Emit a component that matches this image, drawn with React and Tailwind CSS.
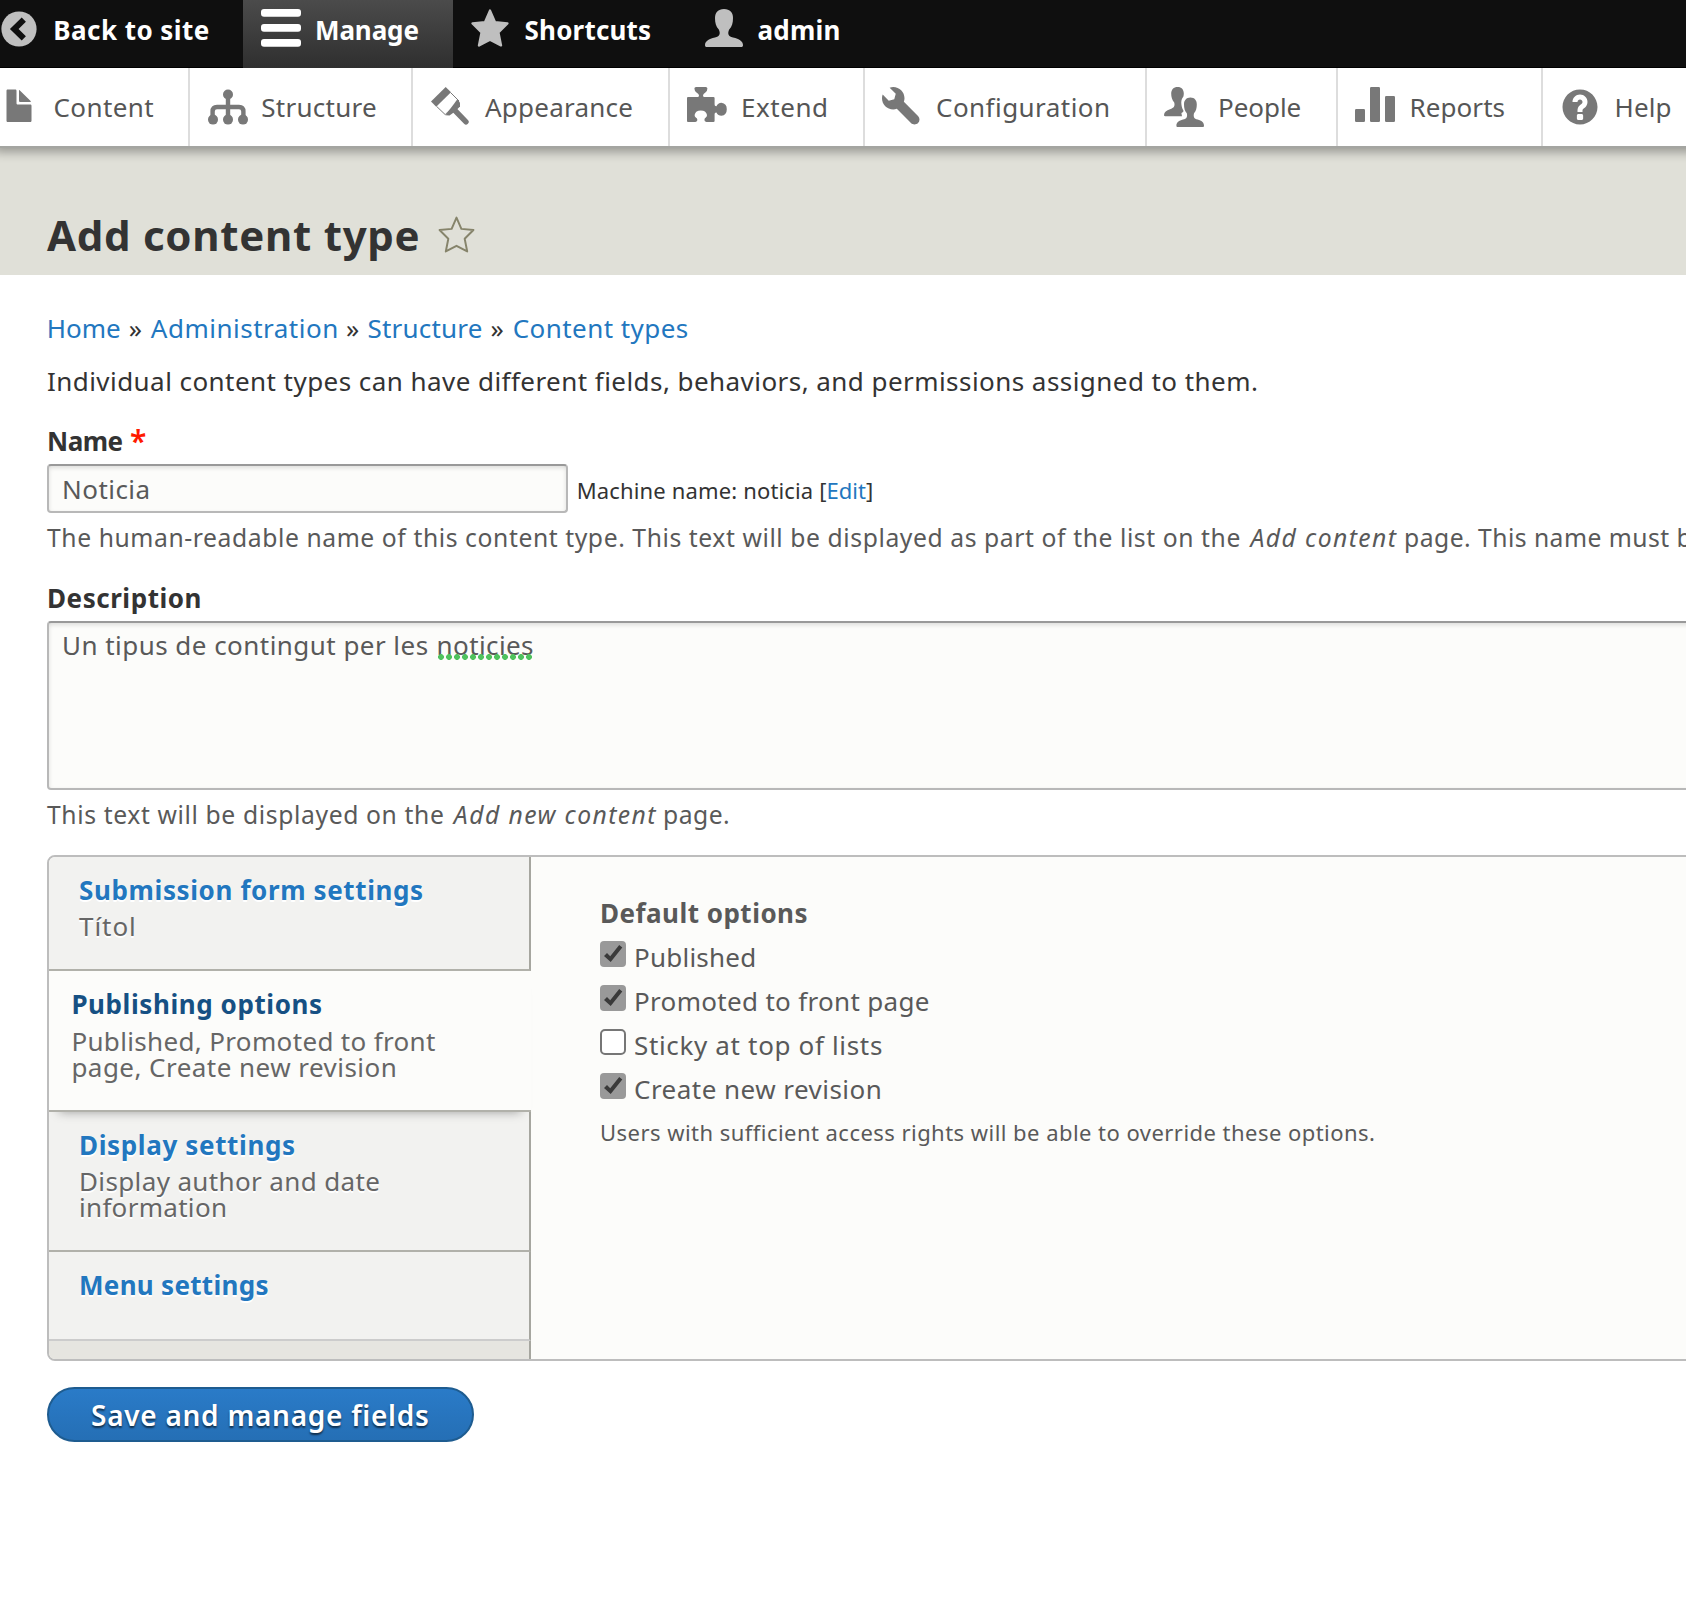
const STAR =
  "M19 1.6 L24 13.2 L36.4 14.4 L27.4 23.4 L30 36.4 L19 30.6 L8 36.4 L10.6 23.4 L1.6 14.4 L14 13.2 Z";

const TOP_ICON = "shrink-0 fill-[#bfbfbf]";
const TRAY_ICON = "mt-[19px] h-10 w-10 shrink-0 fill-[#787878]";

function BackIcon() {
  return (
    <svg viewBox="0 0 36 36" className={TOP_ICON + " ml-px mt-[11px] h-9 w-9"}>
      <circle cx="18" cy="18" r="17.6" />
      <path d="M22.8 8.6 L13.2 18 L22.8 27.4" fill="none" stroke="#0f0f0f" strokeWidth="6" strokeLinejoin="miter" />
    </svg>
  );
}

function MenuIcon() {
  return (
    <svg viewBox="0 0 40 38" className="ml-[18px] mt-[9px] h-[38px] w-10 shrink-0 fill-white">
      <rect width="40" height="7.8" rx="3" />
      <rect y="15" width="40" height="7.8" rx="3" />
      <rect y="30" width="40" height="7.8" rx="3" />
    </svg>
  );
}

function StarIcon() {
  return (
    <svg viewBox="0 0 38 38" className={TOP_ICON + " ml-[18px] mt-[9px] h-[38px] w-[38px]"}>
      <path d={STAR} stroke="#bfbfbf" strokeWidth="2.4" strokeLinejoin="round" />
    </svg>
  );
}

function UserIcon() {
  return (
    <svg viewBox="0 0 38 38" className={TOP_ICON + " mt-[9px] h-[38px] w-[38px]"}>
      <path d="M19 0 C25 0 28 3.5 28 9 C28 14 27 17.5 24.2 20.5 C22.2 25 23.5 27.5 28 28.5 C34.5 30 38 32.5 38 36 C38 37.4 37.5 38 36 38 H2 C.5 38 0 37.4 0 36 C0 32.5 3.5 30 10 28.5 C14.5 27.5 15.8 25 13.8 20.5 C11 17.5 10 14 10 9 C10 3.5 13 0 19 0Z" />
    </svg>
  );
}

function FileIcon() {
  return (
    <svg viewBox="0 0 16 16" className={TRAY_ICON}>
      <path d="M12.502 7h-5c-.276 0-.502-.225-.502-.5v-5c0-.275-.225-.5-.5-.5h-3c-.275 0-.5.225-.5.5v12.029c0 .275.225.5.5.5h9.002c.275 0 .5-.225.5-.5v-6.029c0-.275-.225-.5-.5-.5zM8.502 6h4c.275 0 .34-.159.146-.354l-4.293-4.292c-.195-.195-.353-.129-.353.146v4c0 .275.225.5.5.5z" />
    </svg>
  );
}

function OrgChartIcon() {
  return (
    <svg viewBox="0 0 40 40" className={TRAY_ICON}>
      <circle cx="20" cy="7.5" r="5" />
      <circle cx="5" cy="32.6" r="5" />
      <circle cx="20" cy="32.6" r="5" />
      <circle cx="35" cy="32.6" r="5" />
      <path d="M20 7 V32 M4.6 32 V24.5 Q4.6 20 9 20 H31 Q35.4 20 35.4 24.5 V32" fill="none" stroke="#787878" strokeWidth="4.4" />
    </svg>
  );
}

function BrushIcon() {
  return (
    <svg viewBox="0 0 40 40" className={TRAY_ICON}>
      <path d="M14.7 0 L20 5.2 L5.2 19.8 L0 14.4 Z" />
      <path d="M19.6 5.6 L28 14 L14.2 27.6 L5.6 19.4" fill="none" stroke="#787878" strokeWidth="1" />
      <path d="M26.2 12.6 L29 15.6 V19.4 L25.5 23 L22 26 L18.5 28.6 L14.5 28.2 Z" />
      <path d="M23 22.5 L35 34.8" stroke="#787878" strokeWidth="5.4" strokeLinecap="round" />
    </svg>
  );
}

function PuzzleIcon() {
  return (
    <svg viewBox="0 0 40 40" className={TRAY_ICON}>
      <path d="M1 10 H10.5 Q12 10 12 8.5 Q12 7 9.5 5.4 Q7.4 4 7.4 1.6 Q7.4 0 9 0 H18.8 Q20.4 0 20.4 1.6 Q20.4 4 18.4 5.4 Q16 7 16 8.5 Q16 10 17.5 10 H26.4 Q27.6 10 27.6 11 V17.5 Q27.6 19.4 29.4 19.2 Q31 16 34.4 15.8 Q39.8 16.4 39.8 22.2 Q39.8 28 34.4 28.8 Q31 28.6 29.4 25.4 Q27.6 25.2 27.6 27 V34 Q27.6 35 26.4 35 H19.4 Q17.4 34.6 17.4 33 Q17.4 31.6 18.8 30.6 Q20 29.6 20 28 Q19 23.6 13.8 23.6 Q8.6 23.6 7.6 28 Q7.6 29.6 8.8 30.6 Q10.4 31.6 10.4 33 Q10.4 34.6 8.4 35 H1 Q0 35 0 34 V11 Q0 10 1 10Z" />
    </svg>
  );
}

function WrenchIcon() {
  return (
    <svg viewBox="0 0 16 16" className={TRAY_ICON}>
      <path d="M14.416 11.586l-.01-.008v-.001l-5.656-5.656c.15-.449.252-.921.252-1.421 0-2.485-2.016-4.5-4.502-4.5-.505 0-.981.102-1.434.255l2.431 2.431-.588 2.196-2.196.588-2.445-2.445c-.162.464-.268.956-.268 1.475 0 2.486 2.014 4.5 4.5 4.5.5 0 .972-.102 1.421-.251l5.667 5.665c.781.781 2.047.781 2.828 0s.781-2.047 0-2.828z" />
    </svg>
  );
}

function PeopleIcon() {
  return (
    <svg viewBox="0 0 40 40" className={TRAY_ICON}>
      <path d="M13.6 0 C17.6 0 19.8 2.6 19.8 6.6 Q19.8 8 19.4 9.4 C17.6 11.6 17 14.2 17.4 17.2 C17.6 19.8 18.4 22 19.4 23.6 C19.6 25 18.8 25.4 17.4 26 L18 29.2 H1.2 C.2 29.2 0 28.6 0 28 C.2 25 2.4 23.4 6 22.2 C10 20.8 11.2 18.8 10.2 15.4 C8 13 7.2 10 7.2 6.6 C7.2 2.6 9.6 0 13.6 0Z" />
      <path d="M26.4 10.6 C30.6 10.6 32.8 13.4 32.8 17.4 C32.8 21 32 24 30 26.2 C29.2 29.8 30 31.6 33.6 32.6 C37.6 33.8 40 35.4 40 38.8 C40 39.6 39.6 40 38.6 40 H13.8 C12.8 40 12.4 39.6 12.4 38.8 C12.4 35.4 15 33.8 19 32.6 C22.8 31.6 23.6 29.8 22.8 26.2 C20.8 24 20 21 20 17.4 C20 13.4 22.4 10.6 26.4 10.6Z" />
    </svg>
  );
}

function ChartIcon() {
  return (
    <svg viewBox="0 0 40 40" className={TRAY_ICON}>
      <rect y="22" width="10" height="13" rx="1.2" />
      <rect x="15" width="10" height="35" rx="1.2" />
      <rect x="30" y="9" width="10" height="26" rx="1.2" />
    </svg>
  );
}

function HelpIcon() {
  return (
    <svg viewBox="0 0 16 16" className={TRAY_ICON}>
      <path d="M8.002 1c-3.868 0-7.002 3.134-7.002 7s3.134 7 7.002 7c3.865 0 7-3.134 7-7s-3.135-7-7-7zm3 5c0 .551-.16 1.085-.477 1.586l-.158.22c-.07.093-.189.241-.361.393-.168.148-.35.299-.545.447l-.203.189-.141.129-.096.17-.021.235v.63h-2.001v-.704c.026-.396.078-.73.204-.999.125-.269.271-.498.439-.688l.225-.21-.01-.015.176-.14.137-.128c.186-.139.357-.277.516-.417l.148-.18c.098-.152.168-.323.168-.518 0-.552-.447-1-1.002-1-.548 0-1 .448-1 1h-2.002c.003-1.654 1.35-3 3.002-3 1.657 0 3.002 1.346 3.002 3zm-1.75 6.619c0 .344-.281.625-.625.625h-1.25c-.345 0-.626-.281-.626-.625v-1.238c0-.344.281-.625.626-.625h1.25c.344 0 .625.281.625.625v1.238z" />
    </svg>
  );
}

const TRAY = [
  { label: "Content", Icon: FileIcon, box: "w-[190px]", shift: "-ml-px mr-[0.5px]", ls: "tracking-[0.39px]" },
  { label: "Structure", Icon: OrgChartIcon, box: "w-[223px] pl-[18px]", shift: "-mr-[0.7px]", ls: "tracking-[0.26px]" },
  { label: "Appearance", Icon: BrushIcon, box: "w-[257px] pl-[18px]", shift: "", ls: "tracking-[0.23px]" },
  { label: "Extend", Icon: PuzzleIcon, box: "w-[195px] pl-[17px]", shift: "", ls: "tracking-[0.55px]" },
  { label: "Configuration", Icon: WrenchIcon, box: "w-[282px] pl-[17px]", shift: "", ls: "tracking-[0.45px]" },
  { label: "People", Icon: PeopleIcon, box: "w-[191px] pl-[17px]", shift: "", ls: "tracking-[-0.04px]" },
  { label: "Reports", Icon: ChartIcon, box: "w-[205px] pl-[17px]", shift: "mr-[0.6px]", ls: "tracking-[0.05px]" },
  { label: "Help", Icon: HelpIcon, box: "w-[200px] pl-[17px]", shift: "mr-[0.6px]", ls: "tracking-[0.12px]" },
];

function TopBar() {
  return (
    <div className="flex h-[68px] bg-[#0f0f0f] font-bold text-white shadow-[inset_0_-1px_0_#000]">
      <a className="flex w-[243px]">
        <BackIcon />
        <span className="ml-[16.3px] pt-[14.5px] tracking-[0.45px]">Back to site</span>
      </a>
      <a className="flex w-[210px] bg-linear-to-b from-[#4b4b4b] to-[#2f2f2f]">
        <MenuIcon />
        <span className="ml-[14px] pt-[14.5px] tracking-[-0.12px]">Manage</span>
      </a>
      <a className="flex w-[252px]">
        <StarIcon />
        <span className="ml-[15.5px] pt-[14.5px] tracking-[0.2px]">Shortcuts</span>
      </a>
      <a className="flex">
        <UserIcon />
        <span className="ml-[14.5px] pt-[14.5px] tracking-[0.22px]">admin</span>
      </a>
    </div>
  );
}

function Tray() {
  return (
    <div className="relative z-10 flex h-[80px] w-[1743px] border-b-2 border-[#a4a5a1] bg-white text-[#565656] shadow-[-2px_0_10px_4px_rgba(0,0,0,0.33)] [clip-path:inset(0_0_-20px_0)]">
      {TRAY.map(({ label, Icon, box, shift, ls }) => (
        <a key={label} className={"flex shrink-0 border-r-2 border-[#dddddd] " + box}>
          <span className={"flex " + shift}>
            <Icon />
          </span>
          <span className={"ml-[14px] pt-6 " + ls}>{label}</span>
        </a>
      ))}
    </div>
  );
}

function Breadcrumb() {
  return (
    <nav className="mt-[38px] -ml-[0.2px] flex text-[#2277bf]">
      <a>Home</a>
      <span className="ml-[8px] w-[13.4px] text-[#333]">»</span>
      <a className="ml-[8.6px] tracking-[0.5px]">Administration</a>
      <span className="ml-[7.2px] w-[13.4px] text-[#333]">»</span>
      <a className="ml-[8.2px] tracking-[0.2px]">Structure</a>
      <span className="ml-[8px] w-[13.4px] text-[#333]">»</span>
      <a className="ml-[8.7px] tracking-[0.44px]">Content types</a>
    </nav>
  );
}

const FIELD =
  "rounded-[4px] border-2 border-[#b8b8b8] border-t-[#999] bg-[#fcfcfa] pl-[13px] text-[#595959] shadow-[inset_0_2px_4px_rgba(0,0,0,0.125)]";

function Checkbox({ checked }) {
  if (!checked) return <span className="h-[26px] w-[26px] rounded-[5px] border-2 border-[#767676] bg-white" />;
  return (
    <span className="h-[26px] w-[26px] rounded-[4px] bg-[#999]">
      <svg viewBox="0 0 26 26" className="h-full w-full">
        <path d="M4 15 L7 12 L10.2 15.2 L19.2 4 L22.3 6.4 L10.7 21 Z" fill="#3a3a3a" />
      </svg>
    </span>
  );
}

const OPTIONS = [
  { label: "Published", checked: true, ls: "tracking-[0.22px]" },
  { label: "Promoted to front page", checked: true, ls: "tracking-[0.32px]" },
  { label: "Sticky at top of lists", checked: false, ls: "tracking-[0.66px]" },
  { label: "Create new revision", checked: true, ls: "tracking-[0.47px]" },
];

const TAB = "border-b-2 border-r-2 border-r-[#a6a69f] bg-[#f2f2f0] pl-[30px] pt-[18px] [text-shadow:0_2px_#fff]";
const SUMMARY = "leading-[26px] text-[#666]";

function VerticalTabs() {
  return (
    <div className="mt-[25.5px] flex h-[506px] w-[1720px] overflow-hidden rounded-[8px] border-2 border-[#bdbdbd] bg-[#fcfcfa]">
      <div className="flex w-[482px] shrink-0 flex-col">
        <div className={TAB + " h-[114px] border-b-[#b1b1aa]"}>
          <div className="font-bold tracking-[0.62px] text-[#2277bf]">Submission form settings</div>
          <div className={SUMMARY + " mt-[8px] tracking-[0.95px]"}>Títol</div>
        </div>
        <div className="relative z-10 h-[141px] border-b-2 border-[#b1b1aa] bg-[#fcfcfa] pl-[22.4px] pt-[18px] shadow-[0_10px_10px_-10px_rgba(0,0,0,0.35)]">
          <div className="font-bold tracking-[0.58px] text-[#165083]">Publishing options</div>
          <div className={SUMMARY + " mt-[9px]"}>
            <div className="tracking-[0.34px]">Published, Promoted to front</div>
            <div className="tracking-[0.46px]">page, Create new revision</div>
          </div>
        </div>
        <div className={TAB + " h-[140px] border-b-[#b1b1aa]"}>
          <div className="font-bold tracking-[0.64px] text-[#2277bf]">Display settings</div>
          <div className={SUMMARY + " mt-[8px]"}>
            <div className="tracking-[0.37px]">Display author and date</div>
            <div className="tracking-[0.3px]">information</div>
          </div>
        </div>
        <div className={TAB + " h-[89px] border-b-[#ccc]"}>
          <div className="font-bold tracking-[0.3px] text-[#2277bf]">Menu settings</div>
        </div>
        <div className="flex-1 border-r-2 border-[#a6a69f] bg-[#e6e5e0]" />
      </div>
      <div className="pl-[69px] pt-[41px] text-[#595959]">
        <div className="font-bold tracking-[0.48px]">Default options</div>
        <div className="mt-[13px]">
          {OPTIONS.map((o) => (
            <div key={o.label} className="flex h-11 gap-2">
              <Checkbox checked={o.checked} />
              <span className={"pt-px " + o.ls}>{o.label}</span>
            </div>
          ))}
        </div>
        <div className="text-[22px] tracking-[0.46px]">
          Users with sufficient access rights will be able to override these options.
        </div>
      </div>
    </div>
  );
}

export default function App() {
  return (
    <div className="h-[1612px] w-[1686px] overflow-hidden bg-white font-['Noto_Sans','Open_Sans',sans-serif] text-[26px] leading-[30px] whitespace-nowrap text-[#333]">
      <TopBar />
      <Tray />
      <header className="flex h-[127px] bg-[#e0e0d8] pl-[47px] pt-[57px]">
        <h1 className="text-[42px] leading-[60px] font-bold tracking-[0.72px]">Add content type</h1>
        <svg viewBox="0 0 38 38" className="ml-[17.5px] mt-[11px] h-[37px] w-[37px]">
          <path d={STAR} fill="none" stroke="#86846b" strokeWidth="2" strokeLinejoin="round" />
        </svg>
      </header>
      <main className="pl-[47px]">
        <Breadcrumb />
        <p className="mt-[23px] tracking-[0.445px]">
          Individual content types can have different fields, behaviors, and permissions assigned to them.
        </p>

        <div className="mt-[30px] flex font-bold">
          <span className="tracking-[-0.5px]">Name</span>
          <span className="ml-[7.5px] text-[30px] font-semibold text-[#ff1a00]">*</span>
        </div>
        <div className="mt-2 flex">
          <div className={FIELD + " h-[49px] w-[521px] pt-2 tracking-[0.45px]"}>Noticia</div>
          <div className="ml-[8.7px] flex pt-[11px] text-[22px]">
            <span className="tracking-[0.15px]">Machine name: noticia</span>
            <span className="ml-[6px]">[</span>
            <a className="text-[#2277bf]">Edit</a>
            <span>]</span>
          </div>
        </div>
        <div className="mt-[9.5px] flex text-[24.7px] text-[#595959]">
          <span className="tracking-[0.58px]">
            The human-readable name of this content type. This text will be displayed as part of the list on the
          </span>
          <em className="ml-[9.5px] tracking-[1.43px]">Add content</em>
          <span className="ml-[6.6px] tracking-[0.46px]">page. This name must be unique.</span>
        </div>

        <div className="mt-[30.5px] font-bold tracking-[0.54px]">Description</div>
        <div className={FIELD + " mt-2 flex h-[169px] w-[1720px] pt-[7px]"}>
          <span className="tracking-[0.46px]">Un tipus de contingut per les</span>
          <span className="relative ml-[8px] h-[30px] tracking-[0.39px]">
            noticies
            <span className="absolute top-[24px] left-0 h-[6px] w-24 bg-[radial-gradient(circle,#4fc25e_2.6px,transparent_3.2px)] bg-[length:8px_6px]" />
          </span>
        </div>
        <div className="mt-[9.5px] flex text-[24.7px] text-[#595959]">
          <span className="tracking-[0.62px]">This text will be displayed on the</span>
          <em className="ml-[9.4px] tracking-[1.43px]">Add new content</em>
          <span className="ml-[6px] tracking-[0.5px]">page.</span>
        </div>

        <VerticalTabs />

        <button className="mt-[26px] flex h-[55px] w-[427px] rounded-full border-2 border-[#1e5c90] bg-linear-to-b from-[#2a7bc8] to-[#256fb5] pt-[10.5px] pl-[42px] text-[28px] leading-[30px] font-semibold tracking-[0.73px] text-white [text-shadow:0_2px_2px_rgba(0,0,0,0.6)]">
          Save and manage fields
        </button>
      </main>
    </div>
  );
}
